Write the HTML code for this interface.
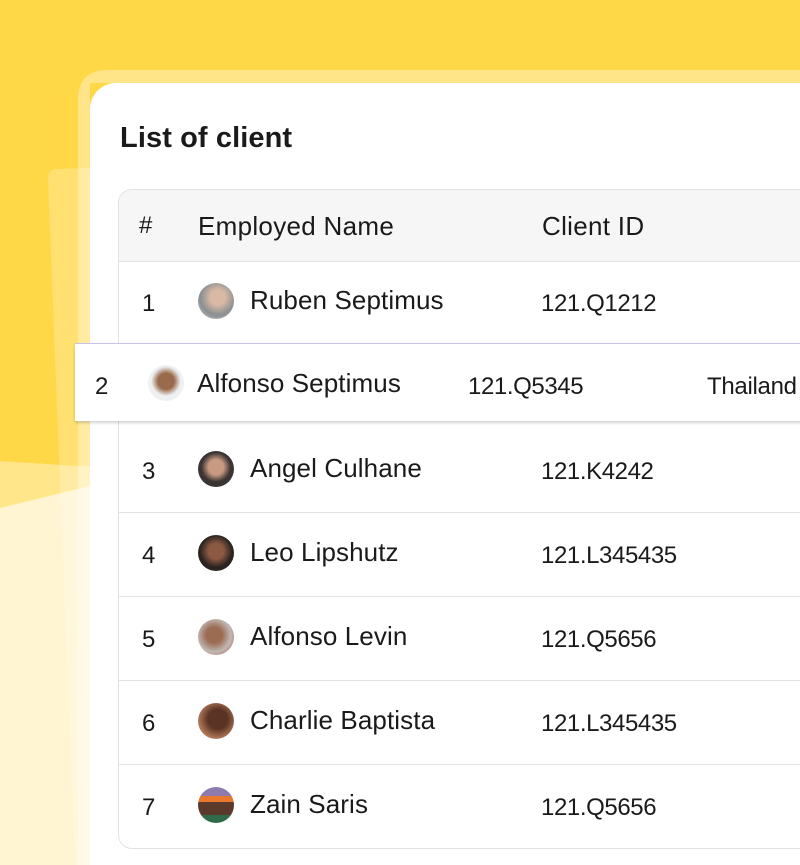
<!DOCTYPE html>
<html><head><style>
*{margin:0;padding:0;box-sizing:border-box}
html,body{width:800px;height:865px;overflow:hidden}
body{position:relative;background:#FFD848;font-family:"Liberation Sans",sans-serif;color:#1a1a1a}
svg.bg{position:absolute;left:0;top:0}
.card{position:absolute;left:90px;top:83px;width:710px;height:782px;background:#fff;border-radius:26px 0 0 0}
.title{position:absolute;left:120px;top:122px;font-size:29px;font-weight:600;letter-spacing:0.1px}
.table{position:absolute;left:118px;top:189px;width:720px;height:660px;border:1.5px solid #e2e2e2;border-radius:14px;overflow:hidden;background:#fff}
.hdr{position:absolute;left:0;top:0;width:100%;height:72px;background:#f6f6f6;border-bottom:1.5px solid #e2e2e2}
.row{position:absolute;left:0;width:100%;height:84px;border-bottom:1.5px solid #e2e2e2}
.t{position:absolute;font-size:24px;white-space:nowrap;letter-spacing:-0.4px}
.n{font-size:26px;letter-spacing:0.1px}
.av{position:absolute;width:36px;height:36px;border-radius:50%}
.float{position:absolute;left:75px;top:343px;width:740px;height:78px;background:#fff;border-top:1px solid #c9c3ea;box-shadow:0 2px 3px rgba(0,0,0,.18)}
</style></head><body>
<svg class="bg" width="800" height="865">
<polygon points="0,461 78,466 90,466 90,865 0,865" fill="#FFE68A"/>
<polygon points="0,508 90,486 90,865 0,865" fill="#FFF5D2"/>
<path d="M48,178 Q48,170 56,169 L90,168 L90,865 L75,865 Z" fill="#FFFFFF" fill-opacity="0.22"/>
<path d="M78,865 L78,100 Q78,70 108,70 L800,70 L800,83 L90,83 L90,865 Z" fill="#FFFFFF" fill-opacity="0.35"/>
</svg>
<div class="card"></div>
<div class="title">List of client</div>
<div class="table">
 <div class="hdr"></div>
 <div class="t" style="left:20px;top:22px">#</div>
 <div class="t n" style="left:79px;top:21px;letter-spacing:0.3px">Employed Name</div>
 <div class="t n" style="left:423px;top:21px;letter-spacing:0.3px">Client ID</div>
 <div class="row" style="top:72px"></div>
 <div class="row" style="top:239px"></div>
 <div class="row" style="top:323px"></div>
 <div class="row" style="top:407px"></div>
 <div class="row" style="top:491px"></div>
 <div class="row" style="top:575px;border-bottom:none"></div>
</div>
<div class="t" style="left:142px;top:290px">1</div>
<div class="av" style="left:198px;top:283px;background:radial-gradient(circle at 55% 40%,#d9b9a3 0 25%,#8a8f92 60%,#c8cccd)"></div>
<div class="t n" style="left:250px;top:285px">Ruben Septimus</div>
<div class="t" style="left:541px;top:290px">121.Q1212</div>
<div class="float">
 <div class="t" style="left:20px;top:29px">2</div>
 <div class="av" style="left:73px;top:21px;background:radial-gradient(circle at 50% 45%,#9a6a4c 0 30%,#eef0f2 55%)"></div>
 <div class="t n" style="left:122px;top:24px">Alfonso Septimus</div>
 <div class="t" style="left:393px;top:29px">121.Q5345</div>
 <div class="t" style="left:632px;top:29px;letter-spacing:-0.3px">Thailand</div>
</div>
<div class="t" style="left:142px;top:458px">3</div>
<div class="av" style="left:198px;top:451px;background:radial-gradient(circle at 50% 45%,#c99a82 0 28%,#3a3433 55%)"></div>
<div class="t n" style="left:250px;top:453px">Angel Culhane</div>
<div class="t" style="left:541px;top:458px">121.K4242</div>
<div class="t" style="left:142px;top:542px">4</div>
<div class="av" style="left:198px;top:535px;background:radial-gradient(circle at 50% 45%,#8c5a42 0 28%,#2b2320 60%)"></div>
<div class="t n" style="left:250px;top:537px">Leo Lipshutz</div>
<div class="t" style="left:541px;top:542px">121.L345435</div>
<div class="t" style="left:142px;top:626px">5</div>
<div class="av" style="left:198px;top:619px;background:radial-gradient(circle at 45% 45%,#9b6b52 0 28%,#c0b8b4 60%,#b14a3e)"></div>
<div class="t n" style="left:250px;top:621px">Alfonso Levin</div>
<div class="t" style="left:541px;top:626px">121.Q5656</div>
<div class="t" style="left:142px;top:710px">6</div>
<div class="av" style="left:198px;top:703px;background:radial-gradient(circle at 55% 45%,#5b3324 0 35%,#b27a5a 70%)"></div>
<div class="t n" style="left:250px;top:705px">Charlie Baptista</div>
<div class="t" style="left:541px;top:710px">121.L345435</div>
<div class="t" style="left:142px;top:794px">7</div>
<div class="av" style="left:198px;top:787px;background:linear-gradient(#8d7bb0 0 25%,#e8782e 25% 42%,#5a3a2a 42% 78%,#2f6a4a 78%)"></div>
<div class="t n" style="left:250px;top:789px">Zain Saris</div>
<div class="t" style="left:541px;top:794px">121.Q5656</div>
</body></html>
